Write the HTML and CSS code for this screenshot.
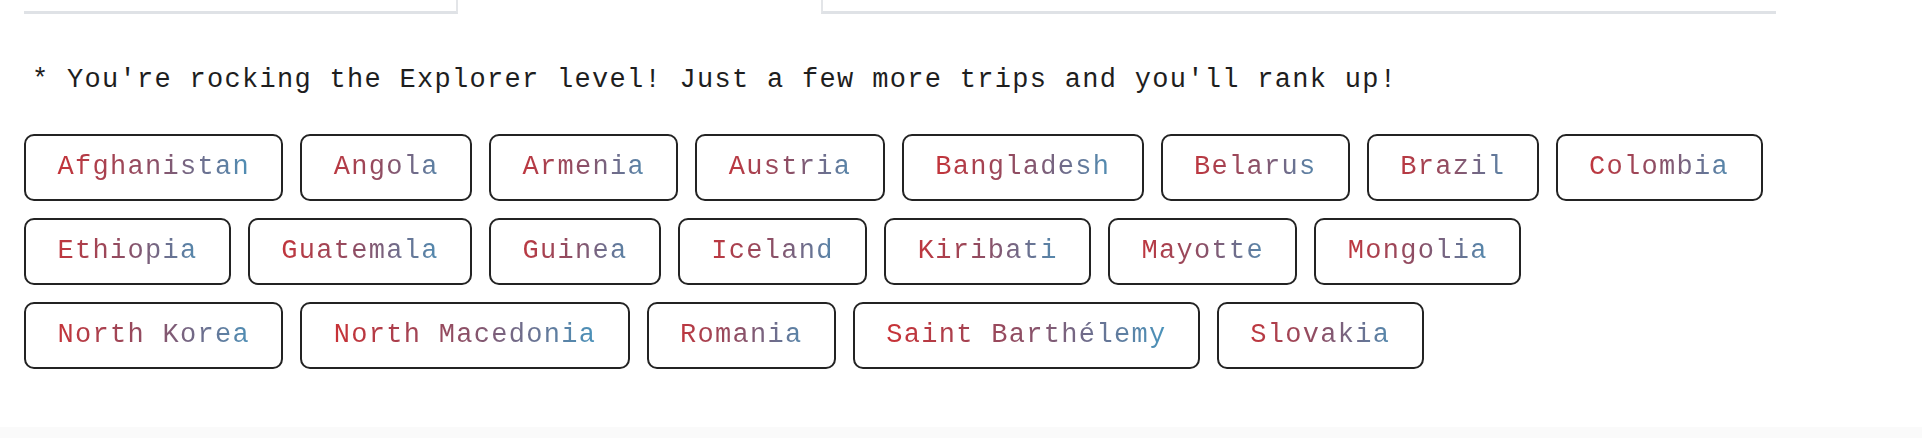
FILE: index.html
```html
<!DOCTYPE html>
<html lang="en">
<head>
<meta charset="utf-8">
<title>Explorer level</title>
<link rel="stylesheet" href="styles.css">
</head>
<body>
<div class="page">
  <div class="top-cards">
    <div class="card card-left"></div>
    <div class="card card-right"></div>
  </div>
  <p class="level-note">* You're rocking the Explorer level! Just a few more trips and you'll rank up!</p>
  <ul class="tags">
    <li class="tag">Afghanistan</li>
    <li class="tag">Angola</li>
    <li class="tag">Armenia</li>
    <li class="tag">Austria</li>
    <li class="tag">Bangladesh</li>
    <li class="tag">Belarus</li>
    <li class="tag">Brazil</li>
    <li class="tag">Colombia</li>
    <li class="tag">Ethiopia</li>
    <li class="tag">Guatemala</li>
    <li class="tag">Guinea</li>
    <li class="tag">Iceland</li>
    <li class="tag">Kiribati</li>
    <li class="tag">Mayotte</li>
    <li class="tag">Mongolia</li>
    <li class="tag">North Korea</li>
    <li class="tag">North Macedonia</li>
    <li class="tag">Romania</li>
    <li class="tag">Saint Barthélemy</li>
    <li class="tag">Slovakia</li>
  </ul>
</div>
<div class="footer-band"></div>
</body>
</html>
```
FILE: styles.css
```css
html, body {
  margin: 0;
  padding: 0;
  background: #ffffff;
}

body {
  font-family: "Liberation Mono", "DejaVu Sans Mono", monospace;
  color: #222222;
}

.page {
  width: 1752px;
  margin-left: 24px;
}

.top-cards {
  display: flex;
  height: 14px;
}

.card {
  box-sizing: border-box;
  height: 14px;
  background: #ffffff;
  border-bottom: 3px solid #dfe2e6;
}

.card-left {
  width: 434px;
  border-right: 2px solid #e3e5e8;
}

.card-right {
  width: 955px;
  margin-left: 363px;
  border-left: 2px solid #e3e5e8;
}

.level-note {
  margin: 48px 0 0 0;
  padding-left: 8px;
  font-size: 27px;
  line-height: 36px;
  letter-spacing: 1.3px;
  color: #1e1e1e;
}

.tags {
  list-style: none;
  margin: 36px 0 0 0;
  padding: 0;
  display: flex;
  flex-wrap: wrap;
  gap: 17px 17px;
}

.tag {
  box-sizing: border-box;
  height: 67px;
  padding: 0 31.4px;
  display: flex;
  align-items: center;
  border: 2px solid #232323;
  border-radius: 10px;
  font-size: 27px;
  line-height: 33px;
  letter-spacing: 1.3px;
  white-space: nowrap;
  background-image: linear-gradient(90deg, #d72a2a 0%, #8c4f66 50%, #3aa3cf 100%);
  -webkit-background-clip: text;
  background-clip: text;
  color: transparent;
}

.footer-band {
  margin-top: 58px;
  height: 11px;
  background: #fafafa;
}
```
